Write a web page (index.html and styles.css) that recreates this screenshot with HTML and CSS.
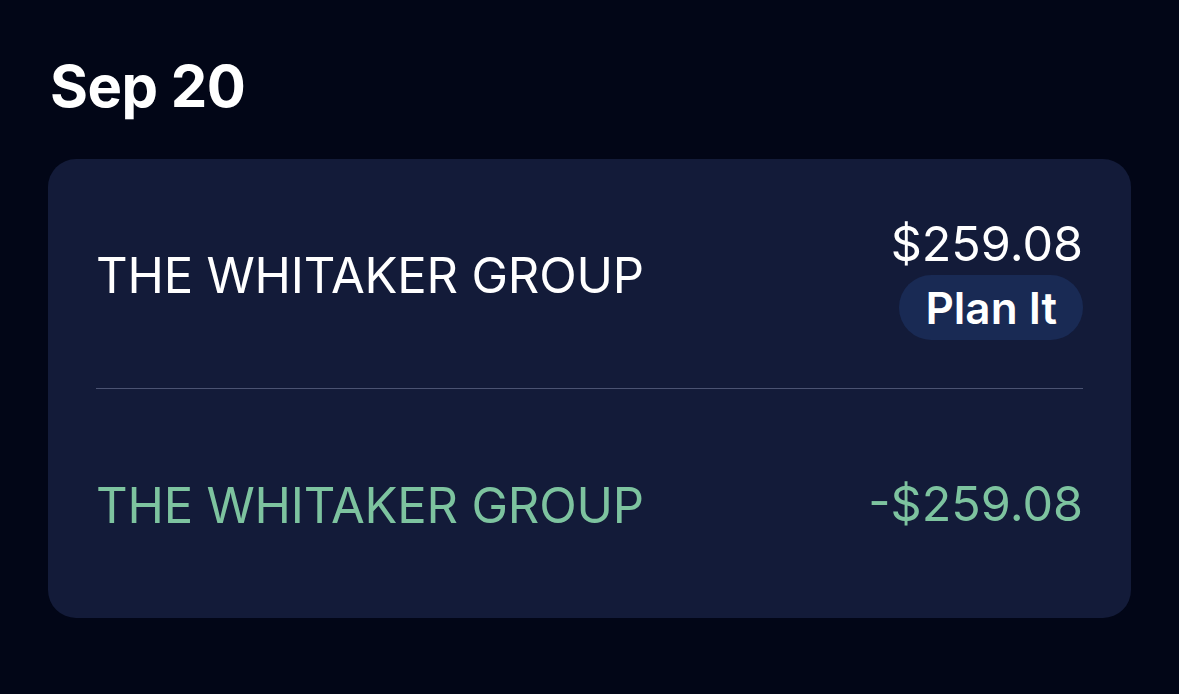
FILE: index.html
```html
<!DOCTYPE html>
<html>
<head>
<meta charset="utf-8">
<link rel="stylesheet" href="styles.css">
</head>
<body>
<main class="page">
  <h1 class="date">Sep 20</h1>
  <section class="card">
    <div class="row">
      <span class="name">THE WHITAKER GROUP</span>
      <div class="right">
        <span class="amount">$259.08</span>
        <button class="pill">Plan It</button>
      </div>
    </div>
    <div class="divider"></div>
    <div class="row">
      <span class="name green">THE WHITAKER GROUP</span>
      <span class="amount green">-$259.08</span>
    </div>
  </section>
</main>
</body>
</html>
```
FILE: styles.css
```css
html, body {
  margin: 0;
  padding: 0;
  background: #020617;
  height: 100%;
}
body {
  font-family: Inter, "Noto Sans", sans-serif;
  color: #ffffff;
}
.page {
  padding: 51px 48px 0 48px;
}
.date {
  margin: 0 0 38px 2px;
  font-size: 58px;
  line-height: 70px;
  font-weight: 700;
  letter-spacing: -0.5px;
}
.card {
  background: #131b39;
  border-radius: 28px;
  padding: 0 48px;
  width: 987px;
}
.row {
  height: 229px;
  display: flex;
  justify-content: space-between;
  align-items: center;
}
.row.second {
  padding-top: 2px;
}
.divider {
  height: 1px;
  background: #4b5372;
}
.name {
  font-size: 49px;
  font-weight: 400;
  letter-spacing: -0.2px;
  padding-top: 4px;
}
.right {
  display: flex;
  flex-direction: column;
  align-items: flex-end;
  padding-top: 8px;
}
.amount {
  font-size: 48.5px;
  line-height: 58px;
  font-weight: 400;
}
.pill {
  margin-top: 2px;
  height: 65px;
  padding: 0 26px;
  border: none;
  border-radius: 33px;
  background: #192a54;
  color: #ffffff;
  font-family: Inter, "Noto Sans", sans-serif;
  font-size: 44px;
  font-weight: 600;
}
.green {
  color: #7dc39f;
}
```
